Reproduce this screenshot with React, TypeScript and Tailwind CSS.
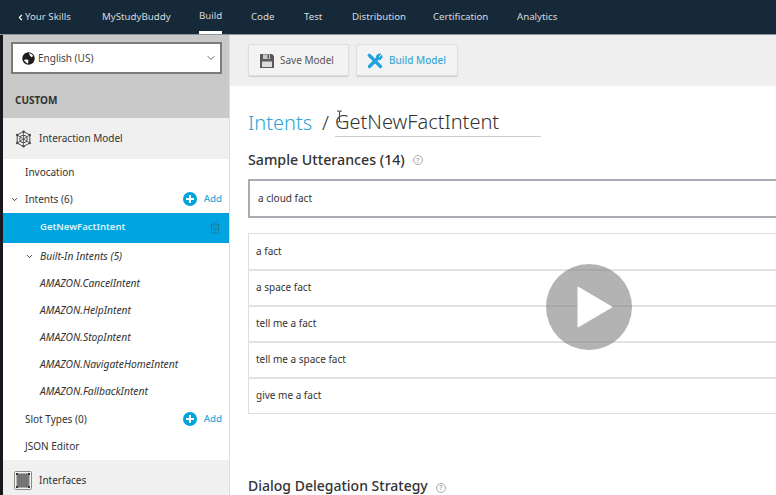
import React from 'react';
import { ChevronDown, ChevronLeft, Trash2 } from 'lucide-react';

const navItems = ['MyStudyBuddy', 'Build', 'Code', 'Test', 'Distribution', 'Certification', 'Analytics'];
const navWidths: Record<string, string> = {
  MyStudyBuddy: 'w-[97px]',
  Build: 'w-[52px]',
  Code: 'w-[53px]',
  Test: 'w-[48px]',
  Distribution: 'w-[81px]',
  Certification: 'w-[84px]',
  Analytics: 'w-[60px]',
};
const builtIn = [
  'AMAZON.CancelIntent',
  'AMAZON.HelpIntent',
  'AMAZON.StopIntent',
  'AMAZON.NavigateHomeIntent',
  'AMAZON.FallbackIntent',
];
const utterances = ['a fact', 'a space fact', 'tell me a fact', 'tell me a space fact', 'give me a fact'];

const Help = ({ className }: { className: string }) => (
  <span
    className={`inline-flex h-[10px] w-[10px] items-center justify-center rounded-full border border-[#aaa] text-[7px] leading-none text-[#999] ${className}`}
  >
    ?
  </span>
);

const AddButton = () => (
  <div className="flex items-center gap-[7px] text-[9.7px] font-medium text-[#2fa8d8]">
    <svg width="14" height="14" viewBox="0 0 14 14">
      <circle cx="7" cy="7" r="7" fill="#00a4dc" />
      <path d="M7 3v8M3 7h8" stroke="#fff" strokeWidth="2" />
    </svg>
    <span>Add</span>
  </div>
);

const SaveIcon = () => (
  <svg width="14" height="14" viewBox="0 0 14 14">
    <path d="M0 0h12l2 2v12H0z" fill="#5a5a5a" />
    <rect x="3" y="0.5" width="7" height="4.5" fill="#c9c9c9" />
    <rect x="7.500" y="1" width="1.500" height="3.500" fill="#5a5a5a" />
    <rect x="2" y="7.500" width="10" height="5.500" fill="#dcdcdc" />
  </svg>
);

const ToolsIcon = () => (
  <svg width="16" height="16" viewBox="0 0 16 16" fill="none" stroke="#1fa3dc">
    <path d="M2.500 13.500 10.500 5.500" strokeWidth="3.400" strokeLinecap="round" />
    <path d="M9.500 4a3 3 0 0 1 4.300-2.700L11.500 3.500l1 1 2.200-2.200A3 3 0 0 1 11 6.500z" fill="#1fa3dc" strokeWidth="1" />
    <path d="M3 3 13.500 13.500" strokeWidth="3.200" strokeLinecap="round" />
    <path d="M1 3 3 1" strokeWidth="2.200" />
  </svg>
);

const GlobeIcon = () => (
  <svg width="13" height="13" viewBox="0 0 13 13">
    <circle cx="6.500" cy="6.500" r="6.200" fill="#1c1c1c" />
    <path d="M7 1.200c1.900.2 3.400 1.300 4.200 2.800L9.500 5.200 7.800 3.600zM1.800 8l3-.8 1.800 1.300-.7 3.200L4 10.600z" fill="#fff" />
  </svg>
);

const ModelIcon = () => (
  <svg width="17" height="18" viewBox="0 0 17 18" fill="none" stroke="#4a4a4a" strokeWidth="1">
    <path d="M8.500 1.500 14.800 5v8l-6.300 3.500L2.200 13V5z" />
    <circle cx="8.500" cy="9" r="3.800" />
    <path d="M8.500 1.500v15M2.200 5l12.600 8M14.800 5 2.200 13" strokeWidth="0.800" />
    <g fill="#4a4a4a" stroke="none">
      <circle cx="8.500" cy="1.800" r="1.300" />
      <circle cx="8.500" cy="16.200" r="1.300" />
      <circle cx="2.200" cy="5" r="1.300" />
      <circle cx="14.800" cy="5" r="1.300" />
      <circle cx="2.200" cy="13" r="1.300" />
      <circle cx="14.800" cy="13" r="1.300" />
    </g>
  </svg>
);

const InterfacesIcon = () => (
  <svg width="18" height="19" viewBox="0 0 18 19">
    <rect x="0.500" y="0.500" width="17" height="18" rx="1" fill="#f4f4f4" stroke="#8a8a8a" />
    <rect x="2.500" y="2.500" width="13" height="14" fill="#7c7c7c" />
    <path d="M5 2.500v14M7.500 2.500v14M10 2.500v14M12.500 2.500v14" stroke="#6a6a6a" strokeWidth="1" />
    <g fill="#333">
      <rect x="2" y="2" width="2" height="2" />
      <rect x="14" y="2" width="2" height="2" />
      <rect x="2" y="15" width="2" height="2" />
      <rect x="14" y="15" width="2" height="2" />
    </g>
  </svg>
);

const App: React.FC = () => {
  return (
    <div
      className="flex h-[495px] w-[776px] flex-col overflow-hidden bg-white text-[#333]"
      style={{ fontFamily: '"Noto Sans", sans-serif' }}
    >
      <header className="flex h-[35px] shrink-0 items-stretch border-b border-[#8a949c] bg-[#152939] pl-[16px] text-[9.7px] text-[#d5dadf]">
        <div className="flex w-[86px] items-center pt-[1px]">
          <ChevronLeft size={9} strokeWidth={3} className="text-white" />
          <span>Your Skills</span>
        </div>
        {navItems.map((item) => (
          <div key={item} className={`flex ${navWidths[item]} items-center`}>
            <span className={item === 'Build' ? 'flex h-full items-center border-b-[3px] border-white pt-[1px]' : 'pt-[1px]'}>
              {item}
            </span>
          </div>
        ))}
      </header>

      <div className="flex min-h-0 flex-1 border-l-[3px] border-[#16191d]">
        <aside className="flex w-[227px] shrink-0 flex-col overflow-hidden border-r border-[#ddd] text-[10px]">
          <div className="h-[83px] shrink-0 bg-[#c8c9c8] pl-[8px] pr-[7px] pt-[7px]">
            <div className="flex h-[32px] items-center border-2 border-[#7b7b7b] bg-white pl-[9px] pr-[3px] text-[10px] text-[#444]">
              <GlobeIcon />
              <span className="ml-[3px] flex-1">English (US)</span>
              <ChevronDown size={12} className="text-[#666]" />
            </div>
            <div className="mt-[19px] pl-[4px] text-[10px] font-bold text-[#333]">CUSTOM</div>
          </div>
          <div className="flex h-[41px] shrink-0 items-center gap-[7px] bg-[#f0f0f0] pl-[12px]">
            <ModelIcon />
            <span>Interaction Model</span>
          </div>
          <div className="flex h-[27px] shrink-0 items-center pl-[22px]">Invocation</div>
          <div className="flex h-[27px] shrink-0 items-center pl-[7px] pr-[7px]">
            <ChevronDown size={9} strokeWidth={2.5} className="mr-[6px]" />
            <span className="flex-1">Intents (6)</span>
            <AddButton />
          </div>
          <div className="flex h-[30px] shrink-0 items-center bg-[#00a4e0] pl-[37px] pr-[8px] pb-[1px] text-[9.5px] font-semibold text-[#dff4fc]">
            <span className="flex-1">GetNewFactIntent</span>
            <Trash2 size={12} className="text-[#1580a8]" />
          </div>
          <div className="flex h-[27px] shrink-0 items-center pl-[22px] text-[10.3px] italic">
            <ChevronDown size={9} strokeWidth={2.5} className="mr-[6px] not-italic" />
            <span>Built-In Intents (5)</span>
          </div>
          {builtIn.map((name) => (
            <div key={name} className="flex h-[27px] shrink-0 items-center pl-[37px] text-[10.3px] italic">
              {name}
            </div>
          ))}
          <div className="flex h-[28px] shrink-0 items-center pl-[22px] pr-[7px] pt-[1px]">
            <span className="flex-1">Slot Types (0)</span>
            <AddButton />
          </div>
          <div className="flex h-[27px] shrink-0 items-center pl-[22px]">JSON Editor</div>
          <div className="flex h-[41px] shrink-0 items-center gap-[7px] bg-[#f0f0f0] pl-[11px]">
            <InterfacesIcon />
            <span>Interfaces</span>
          </div>
        </aside>

        <main className="relative min-w-0 flex-1 overflow-hidden">
          <div className="flex h-[51px] items-center gap-[7px] bg-[#efefef] pl-[18px] pb-[1px]">
            <button className="flex h-[32px] w-[101px] items-center gap-[6px] rounded-[2px] border border-[#ddd] bg-[#f3f3f3] pl-[11px] pt-[1px] text-[10px] text-[#555] shadow-[0_1px_1px_#ccc]">
              <SaveIcon />
              Save Model
            </button>
            <button className="flex h-[32px] w-[102px] items-center gap-[6px] rounded-[2px] border border-[#ddd] bg-[#f3f3f3] pl-[10px] pt-[1px] text-[10px] font-medium text-[#3aa9d6] shadow-[0_1px_1px_#ccc]">
              <ToolsIcon />
              Build Model
            </button>
          </div>

          <div className="pl-[18px]">
            <div className="mt-[21px] flex h-[30px] items-end text-[20px] leading-[28px] font-light">
              <span className="text-[#2aa5d5]">Intents</span>
              <span className="ml-[10px] text-[#333]">/</span>
              <span className="ml-[6px] w-[206px] border-b border-[#ccc] text-[#333]">GetNewFactIntent</span>
            </div>
            <div className="mt-[13px] flex items-center text-[14.2px] leading-[20px] font-medium text-[#333]">
              Sample Utterances (14)
              <Help className="ml-[8px]" />
            </div>
            <div className="mt-[9px] flex h-[39px] items-center border-2 border-r-0 border-[#aaabb3] pl-[8px] text-[10px]">
              a cloud fact
            </div>
            <div className="mt-[15px] border border-r-0 border-[#ddd]">
              {utterances.map((text, i) => (
                <div
                  key={text}
                  className={`flex items-center pl-[7px] text-[10px] ${i > 0 ? 'h-[36px] border-t-2 border-[#e2e2e2] pb-[2px]' : 'h-[35px]'}`}
                >
                  {text}
                </div>
              ))}
            </div>
            <div className="mt-[62px] flex items-center text-[14px] leading-[20px] font-medium text-[#333]">
              Dialog Delegation Strategy
              <Help className="ml-[8px] mt-[3px]" />
            </div>
          </div>

          {/* video play overlay */}
          <div className="absolute left-[316px] top-[229px] flex h-[86px] w-[86px] items-center justify-center rounded-full bg-[#808080]/60">
            <svg width="36" height="42" viewBox="0 0 36 42" className="ml-[11px]">
              <path d="M1 1v40l34-20z" fill="#fff" stroke="#fff" strokeLinejoin="round" />
            </svg>
          </div>
          {/* text cursor */}
          <svg width="7" height="13" viewBox="0 0 7 13" className="absolute left-[106px] top-[75px]">
            <path d="M1 1h2l.500 1 .500-1h2M3.500 2v9M1 12h2l.500-1 .500 1h2" fill="none" stroke="#444" strokeWidth="1" />
          </svg>
        </main>
      </div>
    </div>
  );
};

export default App;
